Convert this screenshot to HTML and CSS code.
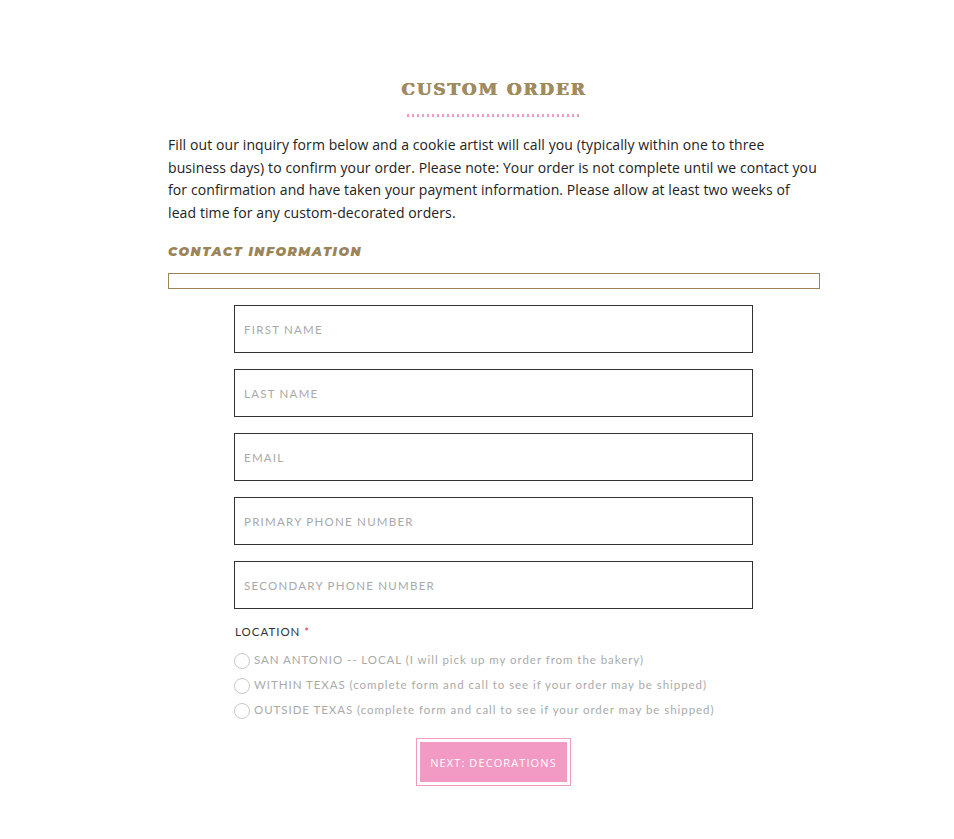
FILE: index.html
```html
<!DOCTYPE html>
<html>
<head>
<meta charset="utf-8">
<link rel="stylesheet" href="styles.css">
</head>
<body>
<main class="page">
  <h1 class="title">CUSTOM ORDER</h1>
  <div class="dots"></div>
  <p class="intro">Fill out our inquiry form below and a cookie artist will call you (typically within one to three business days) to confirm your order. Please note: Your order is not complete until we contact you for confirmation and have taken your payment information. Please allow at least two weeks of lead time for any custom-decorated orders.</p>
  <h2 class="section">CONTACT INFORMATION</h2>
  <div class="bar"></div>
  <form class="form">
    <input class="field" type="text" placeholder="FIRST NAME">
    <input class="field" type="text" placeholder="LAST NAME">
    <input class="field" type="text" placeholder="EMAIL">
    <input class="field" type="text" placeholder="PRIMARY PHONE NUMBER">
    <input class="field" type="text" placeholder="SECONDARY PHONE NUMBER">
    <div class="label">LOCATION <span class="req">*</span></div>
    <div class="radios">
      <label class="radio"><span class="circle"></span>SAN ANTONIO -- LOCAL (I will pick up my order from the bakery)</label>
      <label class="radio"><span class="circle"></span>WITHIN TEXAS (complete form and call to see if your order may be shipped)</label>
      <label class="radio"><span class="circle"></span>OUTSIDE TEXAS (complete form and call to see if your order may be shipped)</label>
    </div>
    <div class="btnwrap"><button type="button" class="btn">NEXT: DECORATIONS</button></div>
  </form>
</main>
</body>
</html>
```

FILE: styles.css
```css
* { box-sizing: border-box; }
body { margin: 0; background: #fff; font-family: "Open Sans", "Noto Sans", sans-serif; }
.page { width: 652px; margin: 0 0 0 168px; padding-top: 78px; display: flex; flex-direction: column; }
.title {
  margin: 0; text-align: center;
  font-family: "DejaVu Serif", serif; font-weight: bold; font-size: 17px;
  letter-spacing: 1.8px; color: #a08a5e; line-height: 22px;
  text-shadow: 0.5px 0 0 #a08a5e, -0.3px 0 0 #a08a5e;
}
.dots {
  align-self: center; width: 175px; height: 3px; margin-top: 14px;
  background-image: linear-gradient(to right, #f29ac4 50%, transparent 50%);
  background-size: 5px 3px;
}
.intro {
  margin: 17px 0 0; font-size: 14px; letter-spacing: 0.1px; line-height: 22.6px; color: #222;
}
.section {
  margin: 20px 0 0; font-family: "Montserrat", "Lato", sans-serif; font-style: italic;
  font-weight: 900; font-size: 12.5px; letter-spacing: 1.5px; color: #9a8458; line-height: 16px;
}
.bar { height: 16px; border: 1px solid #9a8458; margin-top: 13px; }
.form { width: 519px; margin: 16px 0 0 66px; display: flex; flex-direction: column; gap: 16px; }
.field {
  height: 48px; border: 1px solid #333; padding: 0 9px; margin: 0;
  font-family: "Lato", "Montserrat", sans-serif; font-size: 11.5px; letter-spacing: 1.25px;
  background: #fff; outline: none;
}
.field::placeholder { color: #a9a9a9; }
.label {
  margin-top: 0; font-family: "Lato", sans-serif; font-size: 11.5px; letter-spacing: 1px; color: #333;
  line-height: 14px; padding-left: 1px;
}
.req { color: #e0334d; }
.radios { display: flex; flex-direction: column; gap: 6px; margin-top: -5px; }
.radio {
  display: flex; align-items: center; gap: 4px;
  font-family: "Lato", sans-serif; font-size: 11.5px; letter-spacing: 0.95px; color: #aaa; line-height: 17px;
}
.circle { width: 16px; height: 16px; border: 1px solid #c8c8c8; border-radius: 50%; flex: none; margin-top: 3px; }
.btnwrap { align-self: center; margin-top: 3px; border: 1px solid #f29ac4; padding: 3px; }
.btn {
  display: block; width: 147px; height: 40px; border: none; background: #f29ac4; color: #fff;
  font-family: "Open Sans", sans-serif; font-size: 11px; letter-spacing: 1.1px; padding: 0;
}
```
